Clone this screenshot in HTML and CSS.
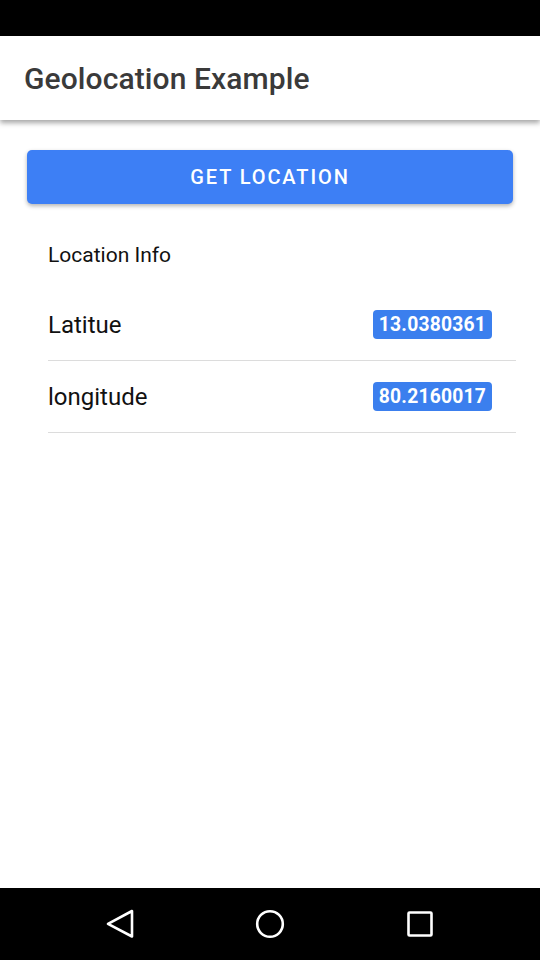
FILE: index.html
```html
<!DOCTYPE html>
<html>
<head>
<meta charset="utf-8">
<link rel="stylesheet" href="styles.css">
</head>
<body>
<div class="screen">
  <div class="status-bar"></div>
  <header class="app-bar">
    <h1 class="title">Geolocation Example</h1>
  </header>
  <main class="content">
    <button class="get-btn">GET LOCATION</button>
    <section class="info">
      <div class="info-head">Location Info</div>
      <div class="row">
        <span class="label">Latitue</span>
        <span class="badge">13.0380361</span>
      </div>
      <div class="row">
        <span class="label">longitude</span>
        <span class="badge">80.2160017</span>
      </div>
    </section>
  </main>
  <nav class="nav-bar">
    <svg class="nav-icon" width="40" height="40" viewBox="0 0 40 40"><path d="M32 7 L32 32.5 L8 19.8 Z" fill="none" stroke="#fff" stroke-width="2.6" stroke-linejoin="round"/></svg>
    <svg class="nav-icon" width="40" height="40" viewBox="0 0 40 40"><circle cx="20" cy="20" r="12.8" fill="none" stroke="#fff" stroke-width="2.6"/></svg>
    <svg class="nav-icon" width="40" height="40" viewBox="0 0 40 40"><rect x="8.5" y="8.5" width="23" height="23" fill="none" stroke="#fff" stroke-width="2.6" rx="1"/></svg>
  </nav>
</div>
</body>
</html>
```
FILE: styles.css
```css
* { box-sizing: border-box; }
html, body { margin: 0; padding: 0; }
body {
  font-family: Roboto, "Noto Sans", Arial, sans-serif;
  background: #fff;
}
.screen {
  width: 540px;
  height: 960px;
  display: flex;
  flex-direction: column;
  background: #fff;
  overflow: hidden;
}
.status-bar {
  height: 36px;
  background: #000;
  flex: none;
}
.app-bar {
  height: 84px;
  flex: none;
  background: #fff;
  display: flex;
  align-items: center;
  padding-left: 24px;
  box-shadow: 0 3px 5px rgba(0,0,0,0.35);
  position: relative;
  z-index: 1;
}
.title {
  margin: 0;
  font-size: 30px;
  font-weight: 500;
  color: #3a3a3a;
  letter-spacing: 0.1px;
}
.content {
  flex: 1;
  padding: 30px 27px 0 27px;
  display: flex;
  flex-direction: column;
}
.get-btn {
  height: 54px;
  width: 100%;
  border: none;
  border-radius: 5px;
  background: #3d7ff5;
  color: #fff;
  font-family: Roboto, "Noto Sans", Arial, sans-serif;
  font-size: 20px;
  font-weight: 500;
  letter-spacing: 1.9px;
  box-shadow: 0 2px 4px rgba(0,0,0,0.3);
  padding: 0;
}
.info {
  margin: 24px -3px 0 -3px;
  display: flex;
  flex-direction: column;
}
.info-head {
  height: 61px;
  padding-top: 14px;
  padding-left: 24px;
  font-size: 21px;
  line-height: 26px;
  color: #111;
}
.row {
  height: 72px;
  margin-left: 24px;
  border-bottom: 1px solid #dcdcdc;
  display: flex;
  align-items: center;
  justify-content: space-between;
  padding-right: 24px;
}
.label {
  font-size: 24px;
  color: #111;
}
.badge {
  background: #3b7fee;
  color: #fff;
  font-weight: 700;
  font-size: 19.3px;
  border-radius: 4px;
  padding: 4px 6px;
  line-height: 21px;
  letter-spacing: 0.2px;
}
.nav-bar {
  height: 72px;
  flex: none;
  background: #000;
  display: flex;
  align-items: center;
  justify-content: space-between;
  padding: 0 100px;
}
.nav-icon { display: block; }
```
